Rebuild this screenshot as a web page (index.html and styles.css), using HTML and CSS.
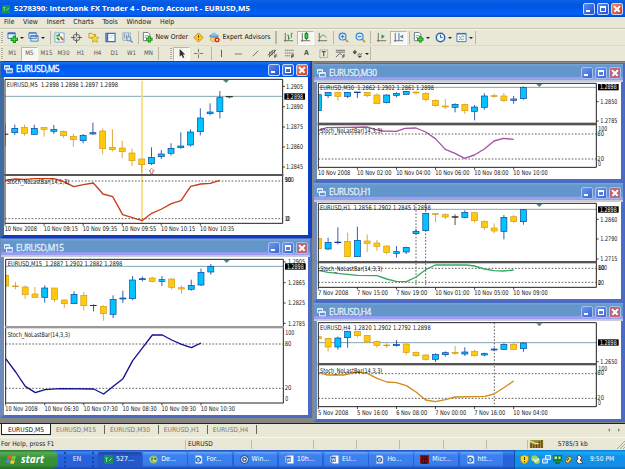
FILE: index.html
```html
<!DOCTYPE html>
<html lang="en">
<head>
    <meta charset="UTF-8">
    <meta name="viewport" content="width=device-width, initial-scale=1.0">
    <title>5278390: Interbank FX Trader 4</title>
    <link rel="stylesheet" href="styles.css">
</head>
<body>
    <svg class="defs" width="0" height="0">
        <symbol id="i-mdi" viewBox="0 0 9 9"><path d="M.5 .8h5v3.6h-5zM2.5 3.6h5.8v4.2H2.5z" fill="#5d8fd8" stroke="#fff"/><path d="M0 1h6M2 4h6.5" stroke="#fff" stroke-width="1.4"/></symbol>
        <symbol id="i-newchart" viewBox="0 0 12 12"><path d="M1 1h8v6H1z" fill="#e8f4ff" stroke="#4778b0"/><path d="M1 1.5h8" stroke="#3973be" stroke-width="2"/><path d="M8 4v8M4 8h8" stroke="#168b19" stroke-width="3.4"/><path d="M8 5v6M5 8h6" stroke="#35d438" stroke-width="1.6"/></symbol>
        <symbol id="i-profiles" viewBox="0 0 12 12"><path d="M1 1h8v6H1zM3 4h8v6H3z" fill="#dcecff" stroke="#4a79b8"/><path d="M1 1h8M3 4.5h8" stroke="#4a79b8" stroke-width="1.5"/></symbol>
        <symbol id="i-market" viewBox="0 0 12 12"><path d="M1 1h10v10H1z" fill="#fff" stroke="#6fa0d0"/><path d="M2.5 4h3v-2M3 6l3 3" stroke="#2aa54c" stroke-width="2" fill="none"/><path d="M7 5l3 4" stroke="#d75341" stroke-width="2"/></symbol>
        <symbol id="i-cross" viewBox="0 0 12 12"><circle cx="6" cy="6" r="3.5" fill="none" stroke="#777" stroke-width="1.2"/><path d="M6 0v5M6 7v5M0 6h5M7 6h5" stroke="#555"/></symbol>
        <symbol id="i-nav" viewBox="0 0 12 12"><path d="M1 1.500h3l1 1h3v4H1z" fill="#ffe48a" stroke="#be9a35"/><path d="M7.500 3l1.400 2.700 3 .4-2.200 2.100.6 3-2.800-1.400-2.700 1.400.5-3-2.100-2.100 3-.4z" fill="#ffd93c" stroke="#b98f16" stroke-width=".7"/></symbol>
        <symbol id="i-terminal" viewBox="0 0 12 12"><path d="M1 1.500h10v9H1z" fill="#fff" stroke="#3b70b6" stroke-width="1.300"/><path d="M2.500 2v8" stroke="#3b70b6" stroke-width="2"/><path d="M5 4h5M5 6h3" stroke="#b5cce5" stroke-width=".8"/></symbol>
        <symbol id="i-tester" viewBox="0 0 12 12"><path d="M1 1h8v8H1z" fill="#e9f0f7" stroke="#8ba2bd"/><path d="M3 2v5M5 3v4M7 2v3" stroke="#6785a7"/><circle cx="7.500" cy="7.500" r="2.300" fill="#cce4fa" stroke="#6384aa"/><path d="M9 9l2.500 2.500" stroke="#6384aa" stroke-width="1.400"/></symbol>
        <symbol id="i-order" viewBox="0 0 12 12"><path d="M1.500 .5h5l2 2v7h-7z" fill="#fff" stroke="#66737f"/><path d="M3 4h4M3 6h2" stroke="#8c969e"/><path d="M8 4.500v7M4.500 8h7" stroke="#168b19" stroke-width="3.200"/><path d="M8 5.500v5M5.500 8h5" stroke="#36d639" stroke-width="1.500"/></symbol>
        <symbol id="i-warn" viewBox="0 0 12 12"><path d="M6 1l5 5-5 5-5-5z" fill="#ffc72e" stroke="#be8618"/><path d="M6 3.500v3M6 7.500v1" stroke="#7a4e00" stroke-width="1.200"/></symbol>
        <symbol id="i-expert" viewBox="0 0 12 12"><path d="M1.500 5h7l-1 4-3 2-3-2z" fill="#ffd358" stroke="#c79c3a" stroke-width=".7"/><ellipse cx="5.500" cy="4.300" rx="5.200" ry="1.900" fill="#5aa3da"/><path d="M2.500 4q.5-3.500 3-3.500t3 3.500z" fill="#8cc4ee"/><circle cx="8.800" cy="8.500" r="2.800" fill="#d43119"/><path d="M7.800 7.500h2v2h-2z" fill="#fff"/></symbol>
        <symbol id="i-bars" viewBox="0 0 12 12"><path d="M2.500 1v9.500M1 9.500h10" stroke="#666" fill="none"/><path d="M6 8.500v-5h-1.500M6 7h1.500M9 6.500v-5h1.500" stroke="#258c3b" fill="none"/></symbol>
        <symbol id="i-candles" viewBox="0 0 12 12"><path d="M2.500 1v9.500M1 9.500h10" stroke="#666" fill="none"/><path d="M7 0v9" stroke="#167c25"/><path d="M5.500 1.500h3v5.500h-3z" fill="#2ccc3c" stroke="#167c25"/></symbol>
        <symbol id="i-line" viewBox="0 0 12 12"><path d="M2.500 1v9.500M1 9.500h10" stroke="#666" fill="none"/><path d="M3 7q3-7 7-1" stroke="#3ba04d" fill="none"/></symbol>
        <symbol id="i-zoomin" viewBox="0 0 12 12"><path d="M7.500 7.500l3.500 3.500" stroke="#c99c3b" stroke-width="2"/><circle cx="5" cy="5" r="3.800" fill="#d5edff" stroke="#3c84c9" stroke-width="1.200"/><path d="M3 5h4M5 3v4" stroke="#2d6fb6"/></symbol>
        <symbol id="i-zoomout" viewBox="0 0 12 12"><path d="M7.500 7.500l3.500 3.500" stroke="#c99c3b" stroke-width="2"/><circle cx="5" cy="5" r="3.800" fill="#d5edff" stroke="#3c84c9" stroke-width="1.200"/><path d="M3 5h4" stroke="#2d6fb6"/></symbol>
        <symbol id="i-scroll" viewBox="0 0 12 12"><path d="M2.500 1v9.500M1 9.500h10" stroke="#666" fill="none"/><path d="M6 2.500v5l3.500-2.500z" fill="#24a13a"/></symbol>
        <symbol id="i-shift" viewBox="0 0 12 12"><path d="M2.500 1v9.500M1 9.500h10" stroke="#666" fill="none"/><path d="M6.500 1v8" stroke="#2e6fb5"/><path d="M11 3v4l-3.500-2z" fill="#3a86bd"/></symbol>
        <symbol id="i-clock" viewBox="0 0 12 12"><circle cx="6" cy="6" r="4.600" fill="#e7f5ff" stroke="#2c69ae" stroke-width="1.600"/><path d="M6 3v3h2.300" stroke="#2c5685" fill="none"/></symbol>
        <symbol id="i-template" viewBox="0 0 12 12"><path d="M1 1.500h10v9H1z" fill="#fff" stroke="#3b70b6"/><path d="M1 2h10" stroke="#3b70b6" stroke-width="1.500"/><path d="M3 5l2 1 2-1.500 2 .5M3 8.500l2-1 2 1 2-1.500" stroke="#5b8c72" fill="none"/></symbol>
        <symbol id="i-cursor" viewBox="0 0 12 12"><path d="M4 1v8.500l2-2 1.500 3.500 1.500-.7-1.500-3.300h2.500z" fill="#333"/></symbol>
        <symbol id="i-plus" viewBox="0 0 12 12"><path d="M6 1v4M6 7v4M1 6h4M7 6h4" stroke="#555" stroke-width=".8"/></symbol>
        <symbol id="i-vline" viewBox="0 0 12 12"><path d="M6 2v8" stroke="#555"/></symbol>
        <symbol id="i-hline" viewBox="0 0 12 12"><path d="M2 6.500h8" stroke="#777"/></symbol>
        <symbol id="i-trend" viewBox="0 0 12 12"><path d="M3 9l6-6" stroke="#555" stroke-width=".9"/></symbol>
        <symbol id="i-channel" viewBox="0 0 12 12"><path d="M1 8l6-6M2 10l8-8M3 4v5M5.500 3v5M8 2v4M8.500 11V7.500h2.500M8.500 9h2" stroke="#444" fill="none" stroke-width=".9"/></symbol>
        <symbol id="i-fibo" viewBox="0 0 12 12"><path d="M1 2.500h10M1 5.500h10M1 8.500h6" stroke="#666" stroke-dasharray="1.500 .5"/><path d="M8.500 11V7.500h2.500M8.500 9h2" stroke="#333" fill="none"/></symbol>
        <symbol id="i-label" viewBox="0 0 12 12"><path d="M2 2h8.500v8.500H2z" fill="none" stroke="#777" stroke-width=".7" stroke-dasharray="1.500 .7"/><path d="M4 4h4.500M6.250 4v5" stroke="#333"/></symbol>
        <symbol id="i-fan" viewBox="0 0 12 12"><path d="M1 2.500h10M1 4.500h10" stroke="#666"/><path d="M1 10l4-4 2 1M8.500 11V7.500h2.500M8.500 9h2" stroke="#555" fill="none"/></symbol>
        <symbol id="i-arrows" viewBox="0 0 12 12"><path d="M3 2l2.500 2.500L3 7 .8 4.500z" fill="#555"/><path d="M6 8l2-2 1 1.500 2-2" stroke="#555" fill="none"/><path d="M6 8.500h5l-2.500 2.500z" fill="#444"/></symbol>
        <symbol id="i-page" viewBox="0 0 9 9"><path d="M1.500 .5h5l1.500 1.500v6.500h-6.500z" fill="#f3f8ff" stroke="#9ab4dd" stroke-width=".6"/><circle cx="4.300" cy="4.800" r="2.200" fill="none" stroke="#1c61c7" stroke-width="1.200"/><path d="M2 5h4.500" stroke="#1c61c7" stroke-width=".8"/></symbol>
        <symbol id="i-word" viewBox="0 0 9 9"><path d="M2.500 .5h6v8h-6z" fill="#fff" stroke="#9ab4dd" stroke-width=".6"/><path d="M.5 1.500h5.500v5.500H.5z" fill="#2f63c0" stroke="#fff" stroke-width=".5"/><path d="M1.700 3l.8 2.700.9-2.200.9 2.200.8-2.700" stroke="#fff" stroke-width=".7" fill="none"/></symbol>
        <symbol id="i-media" viewBox="0 0 9 9"><circle cx="4.500" cy="4.500" r="4" fill="#dbe9ff" stroke="#213d78"/><circle cx="4.500" cy="4.500" r="2.400" fill="#20519e"/><path d="M3.700 3l2.500 1.500-2.500 1.500z" fill="#fff"/></symbol>
        <symbol id="i-globe" viewBox="0 0 9 9"><circle cx="4.500" cy="4.500" r="4" fill="#91c36a"/><path d="M1 4.500q1.500-3 3 0t3 0" stroke="#fff" fill="none"/><circle cx="3" cy="4" r="1" fill="#35652c"/><circle cx="6.200" cy="4" r="1" fill="#35652c"/></symbol>
        <symbol id="i-red" viewBox="0 0 9 9"><path d="M0 0h9v9H0z" fill="#8f1720"/><path d="M1 2h7M2 4h5v4H2zM4.500 4v4" stroke="#2c0306" fill="none"/></symbol>
        <symbol id="i-green" viewBox="0 0 9 9"><path d="M0 0h9v9H0z" fill="#1b8c5b"/><path d="M1 3h3M2.500 3v4M5 6l3-3" stroke="#65e7aa" fill="none"/></symbol>
        <symbol id="i-flag" viewBox="0 0 11 11"><path d="M2 1.500q2-1 3.300 0L4.500 5Q3 4 1 5z" fill="#f1582a"/><path d="M6 1.800q2 1 4 0L9 5.300q-2 1-3.800 0z" fill="#85c53e"/><path d="M1 5.700q2-1 3.400 0L3.500 9Q2 8 0 9z" fill="#4a8df0"/><path d="M5 6q2 1 4 0l-1 3.300q-2 1-3.900 0z" fill="#ffcf31"/></symbol>
    </svg>

    <div class="titlebar">
        <svg class="app-icon"><use href="#i-green"/></svg>
        <span class="app-title">5278390: Interbank FX Trader 4 - Demo Account - EURUSD,M5</span>
        <div class="controls"><i class="min"></i><i class="max"></i><i class="close"></i></div>
    </div>

    <div class="menu">
        <span>File</span><span>View</span><span>Insert</span><span>Charts</span><span>Tools</span><span>Window</span><span>Help</span>
    </div>

    <div class="toolbar main-tools">
        <div class="grip"></div>
        <div class="drop"><svg><use href="#i-newchart"/></svg></div>
        <div class="drop"><svg><use href="#i-profiles"/></svg></div>
        <div class="sep sep-a"></div>
        <div class="tool"><svg><use href="#i-market"/></svg></div>
        <div class="tool"><svg><use href="#i-cross"/></svg></div>
        <div class="tool"><svg><use href="#i-nav"/></svg></div>
        <div class="tool"><svg><use href="#i-terminal"/></svg></div>
        <div class="tool"><svg><use href="#i-tester"/></svg></div>
        <div class="sep sep-b"></div>
        <div class="wide new-order"><svg><use href="#i-order"/></svg><span>New Order</span></div>
        <div class="tool"><svg><use href="#i-warn"/></svg></div>
        <div class="wide experts"><svg><use href="#i-expert"/></svg><span>Expert Advisors</span></div>
        <div class="sep sep-c"></div>
        <div class="tool"><svg><use href="#i-bars"/></svg></div>
        <div class="tool pressed"><svg><use href="#i-candles"/></svg></div>
        <div class="tool"><svg><use href="#i-line"/></svg></div>
        <div class="sep sep-d"></div>
        <div class="tool"><svg><use href="#i-zoomin"/></svg></div>
        <div class="tool"><svg><use href="#i-zoomout"/></svg></div>
        <div class="sep sep-e"></div>
        <div class="tool"><svg><use href="#i-scroll"/></svg></div>
        <div class="tool pressed"><svg><use href="#i-shift"/></svg></div>
        <div class="sep sep-f"></div>
        <div class="drop"><svg><use href="#i-order"/></svg></div>
        <div class="drop"><svg><use href="#i-clock"/></svg></div>
        <div class="drop"><svg><use href="#i-template"/></svg></div>
        <div class="sep"></div>
    </div>

    <div class="toolbar periods">
        <div class="grip"></div>
        <div class="tool">M1</div>
        <div class="tool pressed">M5</div>
        <div class="tool">M15</div>
        <div class="tool">M30</div>
        <div class="tool">H1</div>
        <div class="tool">H4</div>
        <div class="tool">D1</div>
        <div class="tool">W1</div>
        <div class="tool">MN</div>
        <div class="sep sep-g"></div>
        <div class="grip"></div>
        <div class="tool pressed"><svg><use href="#i-cursor"/></svg></div>
        <div class="tool"><svg><use href="#i-plus"/></svg></div>
        <div class="sep sep-h"></div>
        <div class="tool"><svg><use href="#i-vline"/></svg></div>
        <div class="tool"><svg><use href="#i-hline"/></svg></div>
        <div class="tool"><svg><use href="#i-trend"/></svg></div>
        <div class="tool"><svg><use href="#i-channel"/></svg></div>
        <div class="tool"><svg><use href="#i-fibo"/></svg></div>
        <div class="tool letter">A</div>
        <div class="tool"><svg><use href="#i-label"/></svg></div>
        <div class="tool"><svg><use href="#i-fan"/></svg></div>
        <div class="drop"><svg><use href="#i-arrows"/></svg></div>
        <div class="sep"></div>
    </div>

    <div class="desktop">
        <div class="window m15">
            <div class="window-title"><svg><use href="#i-mdi"/></svg><span>EURUSD,M15</span><div class="controls"><i class="min"></i><i class="max"></i><i class="close"></i></div></div>
            <svg class="chart" id="m15" viewBox="12 63 912 474"></svg>
        </div>
        <div class="window m30">
            <div class="window-title"><svg><use href="#i-mdi"/></svg><span>EURUSD,M30</span><div class="controls"><i class="min"></i><i class="max"></i><i class="close"></i></div></div>
            <svg class="chart" id="m30" viewBox="21 66 912 291"></svg>
        </div>
        <div class="window h1">
            <div class="window-title"><svg><use href="#i-mdi"/></svg><span>EURUSD,H1</span><div class="controls"><i class="min"></i><i class="max"></i><i class="close"></i></div></div>
            <svg class="chart" id="h1" viewBox="21 426 912 291"></svg>
        </div>
        <div class="window h4">
            <div class="window-title"><svg><use href="#i-mdi"/></svg><span>EURUSD,H4</span><div class="controls"><i class="min"></i><i class="max"></i><i class="close"></i></div></div>
            <svg class="chart" id="h4" viewBox="21 255 912 294"></svg>
        </div>
        <div class="window m5 active">
            <div class="window-title"><svg><use href="#i-mdi"/></svg><span>EURUSD,M5</span><div class="controls"><i class="min"></i><i class="max"></i><i class="close"></i></div></div>
            <svg class="chart" id="m5" viewBox="12 51 912 474"></svg>
        </div>
    </div>

    <div class="tabs">
        <span class="tab current">EURUSD,M5</span>
        <span class="tab wider">EURUSD,M15</span>
        <span class="tab wider">EURUSD,M30</span>
        <span class="tab">EURUSD,H1</span>
        <span class="tab">EURUSD,H4</span>
        <svg class="tab-arrows" viewBox="0 0 14 6"><path d="M3 1v4l-2-2zM11 1v4l2-2z"/></svg>
    </div>

    <div class="status">
        <span class="help">For Help, press F1</span>
        <span class="symbol">EURUSD</span>
        <span class="c62"></span>
        <span class="c43"></span>
        <span class="c43"></span>
        <span class="c43"></span>
        <span class="c43"></span>
        <span class="c41"></span>
        <span class="traffic">
            <svg viewBox="0 0 15 9"><path d="M0 0h15v9H0z" fill="#8c9a35"/><path d="M1.500 9V4M4.500 9V5M7.500 9V3M10.500 9V1M13.500 9V0" stroke="#8c2a1c" stroke-width="1.500"/><path d="M0 1l6 3h4" stroke="#e9e2b4" fill="none" stroke-width="1.500"/></svg>
            5785/3 kb
        </span>
        <svg class="resize" viewBox="0 0 8 10"><path d="M0 10l8-8M3 10l5-5M6 10l2-2" stroke="#a9a892"/></svg>
    </div>

    <div class="taskbar">
        <div class="start"><svg><use href="#i-flag"/></svg><span>start</span></div>
        <div class="lang"><span>EN</span></div>
        <div class="tasks">
            <div class="task on"><svg><use href="#i-green"/></svg>527...</div>
            <div class="task"><svg><use href="#i-globe"/></svg>De...</div>
            <div class="task"><svg><use href="#i-page"/></svg>For...</div>
            <div class="task"><svg><use href="#i-media"/></svg>Win...</div>
            <div class="task"><svg><use href="#i-word"/></svg>10h...</div>
            <div class="task"><svg><use href="#i-word"/></svg>EU...</div>
            <div class="task"><svg><use href="#i-page"/></svg>Ho...</div>
            <div class="task"><svg><use href="#i-red"/></svg>Micr...</div>
            <div class="task"><svg><use href="#i-page"/></svg>htt...</div>
        </div>
        <div class="tray">
            <svg viewBox="0 0 9 9"><path d="M4.500 0l4 1.300v3.200q0 3-4 4.500-4-1.500-4-4.500V1.300z" fill="#ffd22b" stroke="#a07808" stroke-width=".6"/><path d="M4.500 2v3M4.500 6v1.300" stroke="#333"/></svg>
            <svg viewBox="0 0 9 9"><circle cx="3.500" cy="3.500" r="3.300" fill="#8ed35a"/><circle cx="5.800" cy="5.800" r="3" fill="#b0dc83"/><path d="M2 3.500l2 3 4-3" stroke="#fff" fill="none"/></svg>
            <svg viewBox="0 0 9 9"><path d="M3.500 .5h5v4h-5zM.5 4h5v4h-5z" fill="#5fa7ee" stroke="#dcefff"/></svg>
            <svg viewBox="0 0 9 9"><path d="M0 0h9v6.500H0z" fill="#167d2c"/><path d="M1.500 1.500h2.500v2.500H1.500zM5.500 1.500h2v2.500h-2z" fill="#b9f5a0"/><path d="M2 8h5" stroke="#167d2c" stroke-width="2"/></svg>
            <svg viewBox="0 0 9 9"><path d="M1 6l4-5 3 2.500-4 5z" fill="#f0df5e" stroke="#72641c"/><path d="M3 6l2-3" stroke="#333"/></svg>
            <svg viewBox="0 0 9 9"><path d="M4 0l3 3-2 2 3 3-4 1-3-3 2-2-1-3z" fill="#f3f3ea" stroke="#4c4c4c"/></svg>
            <span>9:50 PM</span>
        </div>
    </div>
    <script src="charts.js"></script>
</body>
</html>
```
FILE: styles.css
```css
html, body {
    width: 100%;
    height: 100%;
    margin: 0;
    padding: 0;
}
body {
    display: flex;
    flex-direction: column;
    overflow: hidden;
    background-color: #e9e7d6;
    color: #222;
    font-family: "DejaVu Sans Condensed", "DejaVu Sans", sans-serif;
    font-size: 6.6px;
    line-height: 1;
    white-space: nowrap;
}
* {
    box-sizing: border-box;
}
svg {
    flex: none;
    display: block;
}
.defs {
    position: absolute;
}

/* title bars */
.titlebar {
    display: flex;
    align-items: center;
    height: 17px;
    flex: none;
    padding: 0 2px;
    background: linear-gradient(#0a62e8, #0054e0 35%, #0062fb 80%, #0347c4);
    color: #fff;
}
.app-icon {
    width: 8px;
    height: 8px;
}
.app-title {
    margin-left: 4px;
    font: bold 7.82px/1 "Open Sans", sans-serif;
}
.controls {
    display: flex;
    gap: 2px;
    margin-left: auto;
}
.controls i {
    position: relative;
    width: 12px;
    height: 12px;
    border: 1px solid #c5d6fa;
    border-radius: 2px;
    background: linear-gradient(135deg, #5a8cf0, #1c4fd0);
}
.controls .close {
    background: linear-gradient(135deg, #ee8868, #cd3a1a);
}
.min::after {
    content: "";
    position: absolute;
    left: 2px;
    bottom: 2px;
    width: 4px;
    height: 2px;
    background: #fff;
}
.max::after {
    content: "";
    position: absolute;
    inset: 2px;
    border: 1px solid #fff;
    border-top-width: 2px;
}
.close::before, .close::after {
    content: "";
    position: absolute;
    left: 1px;
    top: 4px;
    width: 8px;
    height: 1.5px;
    background: #fff;
    transform: rotate(45deg);
}
.close::after {
    transform: rotate(-45deg);
}

/* menu and toolbars */
.menu {
    display: flex;
    align-items: center;
    gap: 8.6px;
    height: 12px;
    flex: none;
    padding-left: 4px;
    font-size: 7px;
    border-bottom: 1px solid #c9c6b2;
}
.toolbar {
    display: flex;
    align-items: center;
    flex: none;
    height: 16px;
    padding-left: 1px;
    border-top: 1px solid #f7f6ee;
}
.periods {
    color: #555;
    font-size: 6.2px;
    border-top-color: #dddac8;
}
.grip {
    width: 2px;
    height: 12px;
    margin-right: 1px;
    background: repeating-linear-gradient(#aaa894 0 1px, #f3f2e8 1px 2px);
}
.tool {
    display: flex;
    align-items: center;
    justify-content: center;
    width: 17px;
    height: 14px;
    flex: none;
}
.tool svg, .drop svg, .wide svg {
    width: 11px;
    height: 11px;
}
.pressed {
    background: #f7f6ef;
    border: 1px solid #b9b7a4;
    border-right-color: #fff;
    border-bottom-color: #fff;
}
.letter {
    font-size: 7px;
    font-weight: bold;
}
.drop {
    display: flex;
    align-items: center;
    gap: 2px;
    width: 21.3px;
    flex: none;
    padding-left: 2.5px;
}
.drop::after {
    content: "";
    border: 2px solid transparent;
    border-top-color: #222;
    border-bottom: 0;
}
.wide {
    display: flex;
    align-items: center;
    gap: 2px;
    flex: none;
    padding-left: 2.5px;
    color: #111;
    font-size: 6.8px;
}
.new-order {
    width: 50px;
}
.experts {
    width: 65px;
}
.sep {
    width: 1px;
    height: 13px;
    flex: none;
    background: #b9b7a4;
}
.sep-a { margin-left: 3.4px; }
.sep-b { margin: 0 1px 0 2px; }
.sep-c { margin: 0 3px 0 3px; width: 2px; }
.sep-d { margin: 0 1px 0 2px; }
.sep-e { margin: 0 2px 0 1px; }
.sep-f { margin: 0 1px 0 2px; }
.sep-g { margin: 0 11px 0 1px; }
.sep-h { margin: 0 1px 0 4px; }

/* chart windows */
.desktop {
    position: relative;
    flex: none;
    height: 362px;
    background: #858583;
    border-top: 1px solid #77766e;
}
.window {
    position: absolute;
    display: flex;
    flex-direction: column;
    width: 312px;
    border: solid #4a6cc2;
    border-width: 1px 4px 3px 4px;
    border-left-color: #6f8cb8;
    background: #fff;
}
.m5 {
    left: 0;
    top: -1px;
    height: 177px;
}
.m15 {
    left: 0;
    top: 176px;
    height: 180px;
}
.m30 {
    left: 313px;
    top: 1px;
    height: 119px;
}
.h1 {
    left: 313px;
    top: 120px;
    height: 120px;
}
.h4 {
    left: 313px;
    top: 240px;
    height: 120px;
}
.window-title {
    display: flex;
    align-items: center;
    flex: 1;
    margin: 0 -2px 0 -3px;
    padding: 0 2px 0 3px;
    background: linear-gradient(#7ba4d6, #6396ca 15%, #6396ca 70%, #9b9df2 76%, #9b9df2 90%, #c9cdda 92%);
    color: #e2edfb;
    font: 8.4px/1 "Open Sans", sans-serif;
    letter-spacing: -.45px;
    -webkit-text-stroke: .3px;
}
.window-title > svg {
    width: 9px;
    height: 9px;
    margin-right: 3px;
    opacity: .85;
}
.window-title .controls i {
    border-color: #a8c0ee;
    background: linear-gradient(135deg, #6f97ec, #3a68d4);
}
.window-title .controls .close {
    background: #bb6678;
}
.active {
    border-color: #0b3dc2;
    border-left-color: #3f6b9e;
}
.active .window-title {
    background: linear-gradient(#1c74ee, #0058ea 25%, #0062fb 85%, #0450cf);
    color: #fff;
}
.active .window-title .controls i {
    border-color: #c5d6fa;
    background: linear-gradient(135deg, #5a8cf0, #1c4fd0);
}
.active .window-title .controls .close {
    background: linear-gradient(135deg, #ee8868, #cd3a1a);
}
.chart {
    width: 304px;
}
.chart text {
    font-size: 20px;
    fill: #111;
    white-space: pre;
}
.chart .tag {
    fill: #fff;
}
.frame {
    fill: none;
    stroke: #222;
    stroke-width: 3;
}
.split {
    stroke: #444;
    stroke-width: 4;
}
.level {
    stroke: #444;
    stroke-width: 2.5;
    stroke-dasharray: 5 5;
}
.price {
    stroke: #82a6ae;
    stroke-width: 3;
}
.stoch {
    fill: none;
    stroke-width: 4;
    stroke-linejoin: round;
}

/* chart tabs */
.tabs {
    display: flex;
    flex: none;
    height: 14px;
    padding-left: 1px;
    border-top: 1px solid #222;
    color: #77766c;
    font-size: 6.7px;
}
.tab {
    width: 49px;
    height: 9px;
    margin-top: 1px;
    padding: 1.5px 3px 0 0;
    text-align: center;
    border-right: 1px solid #66655c;
}
.wider {
    width: 54px;
}
.current {
    width: 50px;
    height: 11px;
    margin-top: 0;
    padding: 2.5px 0 0;
    background: #fff;
    color: #111;
    border: solid #222;
    border-width: 0 1px 1px 1px;
}
.tab-arrows {
    width: 14px;
    height: 6px;
    margin: 3px 4px 0 auto;
    fill: #8a897c;
}

/* status bar */
.status {
    display: flex;
    align-items: center;
    flex: none;
    height: 13px;
    border-top: 1px solid #f8f7ef;
    font-size: 6.6px;
}
.status span {
    height: 9px;
    padding: 1px 0 0 1px;
    flex: none;
    border-right: 1px solid #bdbaa6;
}
.status .help { width: 186px; }
.status .symbol { width: 66px; padding-left: 2px; }
.c62 { width: 62px; }
.c43 { width: 43.2px; }
.c41 { width: 41px; }
.status .traffic {
    display: flex;
    gap: 14px;
    padding-left: 1px;
    border: 0;
}
.traffic svg {
    width: 15px;
    height: 8px;
    margin-top: -1px;
}
.resize {
    width: 8px;
    height: 10px;
    margin-left: auto;
}

/* taskbar */
.taskbar {
    display: flex;
    flex: 1;
    background: linear-gradient(#1d4fc0, #3d86f2 12%, #2863dc 30%, #2660da 85%, #1d49ad);
    color: #fff;
    font-size: 7px;
}
.start {
    display: flex;
    align-items: center;
    gap: 4px;
    width: 58px;
    padding-left: 6px;
    border-radius: 0 7px 7px 0;
    background: linear-gradient(#2c742c, #57ab55 15%, #389138 40%, #378f36 80%, #256d25);
    font: italic bold 10px/1 "Open Sans", sans-serif;
}
.start svg {
    width: 11px;
    height: 11px;
}
.start span {
    margin-top: -2px;
}
.lang {
    display: flex;
    align-items: center;
    justify-content: center;
    width: 30px;
    margin: 2px 4px 2px 6px;
    padding-right: 4px;
    border: dotted #1b43a0;
    border-width: 0 2px;
    color: #e8effd;
}
.tasks {
    display: flex;
    gap: 1.5px;
    padding: 2px 0 2px 0;
}
.task {
    display: flex;
    align-items: center;
    gap: 3px;
    width: 43.7px;
    padding-left: 6px;
    border-radius: 2px;
    background: linear-gradient(#6ea6fa, #3c81f0 20%, #3a7eee 80%, #2c68d3);
}
.task.on {
    background: linear-gradient(#1d46a8, #2458c8 30%);
}
.task svg {
    width: 9px;
    height: 9px;
}
.tray {
    display: flex;
    align-items: center;
    gap: 2px;
    margin-left: auto;
    width: 111px;
    padding-left: 5px;
    border-left: 1px solid #0c4fa8;
    background: linear-gradient(#0c72c8, #19a9f3 12%, #1290e8 35%, #1290e8 85%, #0c6dbb);
}
.tray svg {
    width: 9px;
    height: 9px;
}
.tray span {
    margin-left: 4px;
    font-size: 6.7px;
}
```
FILE: charts.js
```javascript
// All chart values are in thirds of a pixel, same as the viewBox of each svg.
// candle: [colour, high, low, body top, body bottom]
const STEP = 29.3;
const COLORS = {
    b: ['#00c4ff', '#123f9c'],
    y: ['#ffc90c', '#d39a1c'],
    k: ['#333', '#333']
};

const charts = {
    m5: {
        x: 15, right: 848, top: 58, split: [343, 347], bottom: 490, price: 109, shift: 678,
        title: ['EURUSD,M5  1.2898 1.2898 1.2897 1.2898', 20, 80, 334],
        stoch: ['Stoch_NoLastBar(14,1,3)', 20, 371, 188],
        color: '#c93c18', levels: [363, 476],
        marks: [[854, 86, '1.2905'], [854, 147, '1.2890'], [854, 208, '1.2875'], [854, 268, '1.2860'], [854, 328, '1.2845']],
        small: [[854, 366, '100', 28], [854, 366, '90', 20], [854, 482, '10', 16], [857, 482, '0', 11]],
        tag: 109,
        dates: ['10 Nov 2008', '10 Nov 09:15', '10 Nov 09:35', '10 Nov 09:55', '10 Nov 10:15', '10 Nov 10:35'],
        candles: [['k',190,258,222,223],['b',194,225,205,218],['y',194,227,202,220],['b',194,223,205,223],['y',202,230,202,208],['b',195,222,208,214],['y',212,234,214,227],['y',222,260,229,239],['b',222,250,226,242],['b',188,225,218,222],['y',205,283,213,266],['y',208,274,262,269],['y',242,294,264,275],['y',266,318,279,302],['y',296,338,297,314],['b',262,315,292,311],['b',270,297,282,290],['b',250,287,265,280],['b',217,266,258,263],['b',208,260,216,255],['b',145,226,174,215],['b',130,166,156,161],['b',93,175,113,155],['k',109,115,109,111]],
        line: '15,361 45,357 74,358 103,356 162,356 191,365 221,380 250,374 280,369 309,402 338,410 368,464 397,473 426,482 455,460 485,447 514,431 543,422 572,379 602,372 631,370 660,361'
    },
    m15: {
        x: 17, right: 850, top: 70, split: [271, 276], bottom: 501, price: 91, shift: 680, grey: true,
        title: ['EURUSD,M15  1.2887 1.2902 1.2882 1.2898', 23, 91, 344],
        stoch: ['Stoch_NoLastBar(14,3,3)', 23, 302, 187],
        color: '#12128e', levels: [324, 457],
        marks: [[860, 85, '1.2905'], [860, 147, '1.2865'], [860, 208, '1.2825'], [860, 269, '1.2785']],
        small: [[856, 297, '100', 27], [854, 330, '80', 20], [854, 462, '20', 20], [856, 496, '0', 9]],
        tag: 91,
        dates: ['10 Nov 2008', '10 Nov 06:30', '10 Nov 07:30', '10 Nov 08:30', '10 Nov 09:30', '10 Nov 10:30'],
        candles: [['y',116,158,118,150],['y',138,160,150,152],['y',148,188,153,176],['y',153,185,174,184],['b',148,200,156,184],['y',156,198,156,190],['y',190,216,192,203],['b',166,204,175,203],['y',168,223,178,209],['k',205,226,208,209],['y',208,254,211,233],['b',178,246,190,235],['b',164,201,186,189],['b',120,193,132,188],['b',122,136,128,131],['y',122,140,126,136],['b',120,150,131,136],['y',126,161,129,154],['y',148,173,155,159],['b',131,164,148,160],['b',98,150,109,147],['b',84,116,91,108]],
        line: '17,368 47,408 76,451 106,470 135,461 180,458 281,459 311,474 340,451 369,428 398,374 428,335 457,297 487,297 515,312 545,325 574,335 603,321'
    },
    m30: {
        x: 25, right: 859, top: 70, split: [189, 195], bottom: 322, price: 82, shift: 688,
        title: ['EURUSD,M30  1.2862 1.2902 1.2861 1.2898', 30, 90, 342],
        stoch: ['Stoch_NoLastBar(14,3,3)', 30, 219, 187],
        color: '#a8509f', levels: [222, 297],
        marks: [[867, 132, '1.2850'], [867, 190, '1.2785']],
        small: [[865, 214, '100', 27], [862, 227, '80', 20], [862, 303, '20', 20], [864, 317, '0', 9]],
        tag: 81,
        dates: ['10 Nov 2008', '10 Nov 02:00', '10 Nov 04:00', '10 Nov 06:00', '10 Nov 08:00', '10 Nov 10:00'],
        candles: [['b',96,153,104,152],['b',96,114,97,107],['y',97,122,97,109],['b',96,114,97,109],['b',96,114,96,98],['y',96,112,97,107],['y',100,131,105,131],['b',103,130,105,128],['b',97,112,100,106],['b',94,103,94,103],['y',94,104,96,99],['y',97,124,100,119],['y',118,140,121,137],['y',117,147,138,141],['b',130,157,133,142],['y',131,162,133,152],['b',135,181,141,154],['b',100,149,108,142],['y',101,113,107,109],['y',99,126,108,122],['b',108,131,117,121],['b',79,119,82,116]],
        line: '25,212 50,203 110,202 170,201 195,208 220,213 259,214 285,205 318,204 347,216 376,236 406,268 435,280 464,295 493,285 523,267 552,243 580,235 611,238'
    },
    h1: {
        x: 25, right: 859, top: 430, split: [604, 609], bottom: 682, price: 448, shift: 688,
        title: ['EURUSD,H1  1.2856 1.2902 1.2845 1.2898', 30, 450, 332],
        stoch: ['Stoch_NoLastBar(14,3,3)', 30, 633, 187],
        color: '#35a862', levels: [625, 667], verticals: [318, 347],
        marks: [[867, 485, '1.2860'], [867, 544, '1.2790'], [867, 604, '1.2715']],
        small: [[864, 629, '100', 27], [864, 629, '80', 20], [864, 674, '20', 18], [864, 674, '0', 9]],
        tag: 448,
        dates: ['7 Nov 2008', '7 Nov 15:00', '7 Nov 19:00', '10 Nov 01:00', '10 Nov 05:00', '10 Nov 09:00'],
        candles: [['y',533,568,535,566],['b',533,570,547,567],['b',502,553,546,548],['y',518,590,544,590],['b',500,590,541,590],['y',523,576,543,550],['y',540,572,549,559],['y',556,583,558,577],['b',558,593,575,580],['b',560,582,562,576],['b',507,524,514,521],['b',458,514,460,512],['y',460,486,461,463],['y',460,477,464,471],['k',463,495,470,472],['b',451,475,457,472],['y',456,488,458,482],['y',481,510,484,503],['y',490,520,504,513],['b',465,538,472,514],['y',465,488,470,485],['b',447,494,449,485]],
        line: '25,631 54,637 83,640 112,643 142,646 201,647 230,657 259,664 289,665 318,651 347,629 376,615 470,615 493,618 523,627 552,632 580,633 611,630'
    },
    h4: {
        x: 25, right: 859, top: 260, split: [382, 387], bottom: 512, price: 320, shift: 688,
        title: ['EURUSD,H4  1.2820 1.2902 1.2792 1.2898', 30, 281, 332],
        stoch: ['Stoch_NoLastBar(14,3,3)', 30, 411, 187],
        color: '#d08c1c', levels: [413, 487], verticals: [553],
        marks: [[867, 384, '1.2650']],
        small: [[865, 406, '100', 27], [862, 418, '80', 20], [862, 493, '20', 20], [864, 507, '0', 9]],
        tag: 319,
        dates: ['5 Nov 2008', '5 Nov 16:00', '6 Nov 08:00', '7 Nov 00:00', '7 Nov 16:00', '10 Nov 04:00'],
        candles: [['y',298,318,302,308],['y',305,346,307,333],['b',302,341,306,333],['b',284,335,286,305],['y',286,305,286,299],['y',297,320,298,318],['y',313,335,316,328],['y',322,336,327,329],['b',312,332,325,329],['y',322,356,324,349],['y',346,363,349,359],['y',355,374,357,370],['b',352,378,355,370],['b',346,362,350,356],['y',330,356,349,352],['b',334,360,348,354],['y',342,362,346,359],['b',350,361,353,357],['b',336,346,339,342],['b',322,342,325,340],['y',320,342,325,340],['b',318,347,321,338]],
        line: '25,410 54,417 100,417 142,408 172,412 201,427 230,438 259,440 289,449 318,468 347,492 376,497 406,491 435,483 525,481 552,474 580,456 611,435'
    }
};

function text(str, x, y, width, cls = '') {
    return `<text class="${cls}" x="${x}" y="${y}" textLength="${width}" lengthAdjust="spacingAndGlyphs">${str}</text>`;
}

function hline(cls, c, y) {
    return `<line class="${cls}" x1="${c.x}" x2="${c.right}" y1="${y}" y2="${y}"/>`;
}

function draw(id) {
    const c = charts[id];
    let out = `<clipPath id="clip-${id}"><rect x="${c.x}" y="${c.top}" width="${c.right - c.x}" height="${c.bottom - c.top}"/></clipPath>`;
    out += hline('price', c, c.price);

    if (id === 'm5') {
        out += `<path d="M426 62V488" stroke="#f7dc7a" stroke-width="5"/>`;
        out += `<path d="M455 325l8 8h-5v8h-6v-8h-5z" fill="#fff" stroke="#c23b3b" stroke-width="2"/>`;
    }
    (c.verticals || []).forEach(x => {
        out += `<line class="level" x1="${x}" x2="${x}" y1="${c.top}" y2="${c.bottom}"/>`;
    });

    out += `<g clip-path="url(#clip-${id})">`;
    c.candles.forEach(([type, high, low, top, bottom], i) => {
        const x = c.x + STEP * i;
        const [fill, stroke] = COLORS[type];
        out += `<path d="M${x} ${high}V${low}" stroke="${stroke}" stroke-width="2.5"/>`;
        out += `<rect x="${x - 9}" y="${top}" width="18" height="${Math.max(bottom - top, 1)}" fill="${fill}" stroke="${stroke}" stroke-width="2"/>`;
    });
    out += '</g>';

    c.levels.forEach(y => out += hline('level', c, y));
    out += `<polyline class="stoch" points="${c.line}" stroke="${c.color}"/>`;

    // frame, splitter and the shift marker on top
    out += `<path class="frame" d="M${c.x} ${c.bottom}V${c.top}H${c.right}V${c.bottom}H${c.x}"/>`;
    const [s1, s2] = c.split;
    out += `<rect x="${c.x - 2}" y="${s1 - 1}" width="${c.right - c.x + 4}" height="${s2 - s1 + 2}" fill="${c.grey ? '#999' : '#555'}"/>`;
    out += `<path d="M${c.shift - 9} ${c.top + 2}h18l-9 9z" fill="#527f80"/>`;

    out += text(...c.title) + text(...c.stoch);
    c.marks.forEach(([x, y, str]) => {
        out += `<path d="M${c.right} ${y - 7}h7" stroke="#222" stroke-width="2.5"/>` + text(str, x + 4, y, 51);
    });
    c.small.forEach(([x, y, str, w]) => out += text(str, x, y, w));
    out += `<rect x="${c.right + 5}" y="${c.tag - 9}" width="62" height="19" fill="#000"/>`;
    out += text('1.2898', c.right + 11, c.tag + 7, 50, 'tag');

    c.dates.forEach((str, i) => {
        const x = c.x + STEP * 4 * i;
        out += `<path d="M${x} ${c.bottom}v7" stroke="#222" stroke-width="2.5"/>`;
        out += text(str, x - 1, c.bottom + 24, str.length > 11 ? 103 : str.includes(':') ? 93 : str.length > 10 ? 97 : 91);
    });
    document.getElementById(id).innerHTML = out;
}

Object.keys(charts).forEach(draw);
```
